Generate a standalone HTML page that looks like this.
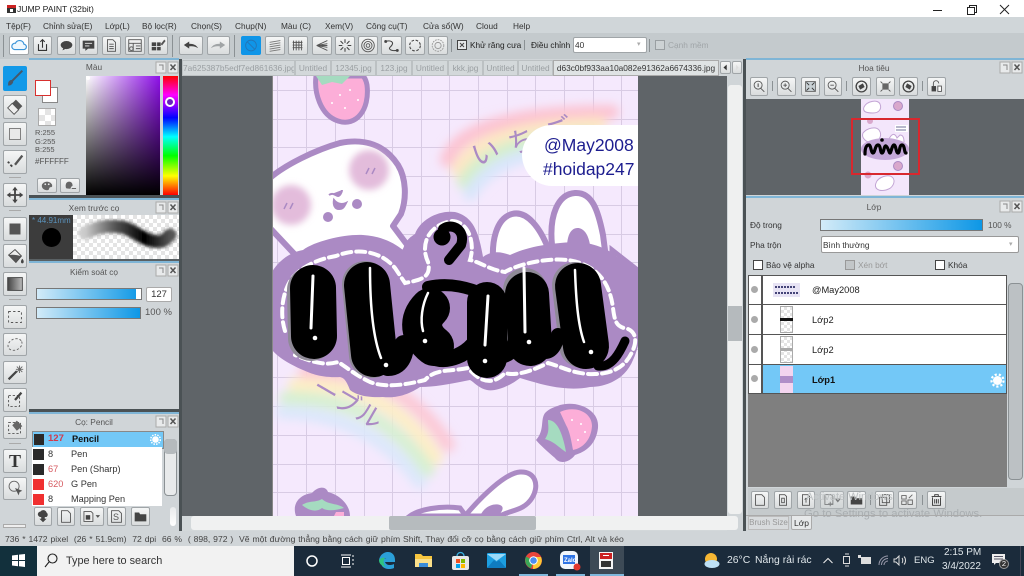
<!DOCTYPE html>
<html><head><meta charset="utf-8"><title>Jump Paint</title>
<style>
html,body{margin:0;padding:0;width:1024px;height:576px;overflow:hidden;background:#d3d8da}
body{position:relative;font-family:"Liberation Sans","Noto Sans CJK JP",sans-serif;font-size:8.3px;color:#333}
.a{position:absolute;box-sizing:border-box}
.t{position:absolute;white-space:nowrap;line-height:12px}
.b{position:absolute;box-sizing:border-box;background:linear-gradient(#f5f6f6,#d9dcdd);border:1px solid #a0a5a8;border-radius:2px}
.b svg{position:absolute;left:0;top:0;width:100%;height:100%}
.ck{position:absolute;box-sizing:border-box;width:10px;height:10px;background:#fff;border:1px solid #444}
.sep{position:absolute;width:1px;background:#8b9194}
.checker{background-color:#fff;background-image:linear-gradient(45deg,#e4e4e4 25%,transparent 25%,transparent 75%,#e4e4e4 75%),linear-gradient(45deg,#e4e4e4 25%,transparent 25%,transparent 75%,#e4e4e4 75%)}
.tab{position:absolute;top:60px;height:16px;box-sizing:border-box;border:1px solid #bcc1c3;background:#d3d8da;color:#9a9fa2;line-height:15px;text-align:center;white-space:nowrap;overflow:hidden}
.row{position:absolute;left:32px;width:130px;height:14px;background:#fff;border-bottom:1px solid #999;font-size:9.2px}
.lr{position:absolute;left:748px;width:259px;box-sizing:border-box;background:#fff;border:1px solid #555}
.m{top:20px}
</style></head>
<body>
<!-- Title bar -->
<div class="a" style="left:0;top:0;width:1024px;height:17px;background:#fff"></div>
<svg class="a" style="left:7px;top:5px" width="9" height="8" viewBox="0 0 9 8"><rect width="9" height="8" fill="#333"/><rect width="9" height="3" fill="#c22"/><rect x="3" y="4" width="3" height="3" fill="#fff"/></svg>
<div class="t" style="left:17px;top:3px;font-size:8.6px;color:#222">JUMP PAINT (32bit)</div>
<svg class="a" style="left:930px;top:2px" width="90" height="14" viewBox="0 0 90 14" fill="none" stroke="#222"><path d="M3 8.500h9"/><path d="M37.500 5.500h7v7h-7zM39.500 5.500v-2h7v7h-2"/><path d="M70 3l9 9M79 3l-9 9"/></svg>

<!-- Menu -->
<div class="a" style="left:0;top:17px;width:1024px;height:16px;background:#d0d6d9"></div>
<div class="t m" style="left:6px">Tệp(F)</div>
<div class="t m" style="left:43px">Chỉnh sửa(E)</div>
<div class="t m" style="left:105px">Lớp(L)</div>
<div class="t m" style="left:142px">Bộ lọc(R)</div>
<div class="t m" style="left:191px">Chọn(S)</div>
<div class="t m" style="left:235px">Chụp(N)</div>
<div class="t m" style="left:281px">Màu (C)</div>
<div class="t m" style="left:325px">Xem(V)</div>
<div class="t m" style="left:366px">Công cụ(T)</div>
<div class="t m" style="left:423px">Cửa sổ(W)</div>
<div class="t m" style="left:476px">Cloud</div>
<div class="t m" style="left:513px">Help</div>

<!-- Toolbar -->
<div class="a" style="left:0;top:33px;width:1024px;height:26px;background:#c4cacd"></div>
<div class="sep" style="left:3px;top:35px;height:22px"></div>
<div class="b" style="left:9px;top:36px;width:20px;height:19px;background:#fff"><svg viewBox="0 0 20 19"><path d="M5 14h10a3 3 0 0 0 .5-6 5 5 0 0 0-9.500-1 3.500 3.500 0 0 0-1 7z" fill="#eef7fd" stroke="#3a94d8" stroke-width="1.300"/></svg></div>
<div class="b" style="left:33px;top:36px;width:19px;height:19px"><svg viewBox="0 0 19 19" fill="none" stroke="#333" stroke-width="1.200"><path d="M5 8v7h9V8M9.500 12V3M7 5.500l2.500-2.500 2.500 2.500"/></svg></div>
<div class="b" style="left:57px;top:36px;width:19px;height:19px"><svg viewBox="0 0 19 19"><ellipse cx="9.500" cy="9" rx="6.500" ry="4.500" fill="#444"/><path d="M6 12l-1 3 4-2z" fill="#444"/></svg></div>
<div class="b" style="left:79px;top:36px;width:19px;height:19px"><svg viewBox="0 0 19 19"><path d="M3 4h13v9H9l-3 2.500V13H3z" fill="#444"/><path d="M5.500 7h8M5.500 10h5" stroke="#eee"/></svg></div>
<div class="b" style="left:102px;top:36px;width:19px;height:19px"><svg viewBox="0 0 19 19" fill="none" stroke="#555"><path d="M5 3h6l3 3v10H5zM7 8h5M7 10.500h5M7 13h5"/></svg></div>
<div class="b" style="left:125px;top:36px;width:20px;height:19px"><svg viewBox="0 0 20 19" fill="none" stroke="#555"><path d="M3 3h14v13H3zM3 7h14M8 7v9M11 10h5M11 13h5"/><circle cx="6" cy="13" r="2"/></svg></div>
<div class="b" style="left:148px;top:36px;width:20px;height:19px"><svg viewBox="0 0 20 19"><path d="M3 6h5v4H3zM9 6h4v4H9zM3 11h5v4H3zM9 11h4v4H9z" fill="#444"/><path d="M13 8l4-5 1.500 1.500-4 5z" fill="#555"/></svg></div>
<div class="sep" style="left:172px;top:35px;height:22px"></div>
<div class="b" style="left:179px;top:36px;width:24px;height:19px"><svg viewBox="0 0 24 19"><path d="M4 9l6-4v2.500c5 0 8 1.500 10 5-3-2-6-2.500-10-2V13z" fill="#444"/></svg></div>
<div class="b" style="left:207px;top:36px;width:23px;height:19px"><svg viewBox="0 0 23 19"><path d="M19 9l-6-4v2.500c-5 0-8 1.500-10 5 3-2 6-2.500 10-2V13z" fill="#a0a4a6"/></svg></div>
<div class="sep" style="left:234px;top:35px;height:22px"></div>
<div class="b" style="left:241px;top:36px;width:20px;height:19px;background:#0f95e8;border-color:#0f95e8"><svg viewBox="0 0 20 19" fill="none" stroke="#2376b8"><circle cx="10" cy="9.500" r="6"/><path d="M6 5.500l8 8"/></svg></div>
<div class="b" style="left:265px;top:36px;width:20px;height:19px"><svg viewBox="0 0 20 19" fill="none" stroke="#777"><path d="M4 6l12-2M4 8.500l12-2M4 11l12-2M4 13.500l12-2M4 16l12-2"/></svg></div>
<div class="b" style="left:288px;top:36px;width:20px;height:19px"><svg viewBox="0 0 20 19" fill="none" stroke="#555"><path d="M5 4v11M8 4v11M11 4v11M14 4v11M4 6h11M4 9h11M4 12h11"/></svg></div>
<div class="b" style="left:312px;top:36px;width:20px;height:19px"><svg viewBox="0 0 20 19" fill="none" stroke="#555"><path d="M4 9.500L16 4M4 9.500L16 7.500M4 9.500h12M4 9.500l12 2M4 9.500L16 15"/></svg></div>
<div class="b" style="left:335px;top:36px;width:20px;height:19px"><svg viewBox="0 0 20 19" fill="none" stroke="#444" stroke-width="1.200"><path d="M10 2.500v4M10 12.500v4M3 9.500h4M13 9.500h4M5 4.500l3 3M15 4.500l-3 3M5 14.500l3-3M15 14.500l-3-3"/></svg></div>
<div class="b" style="left:358px;top:36px;width:20px;height:19px"><svg viewBox="0 0 20 19" fill="none" stroke="#555"><circle cx="10" cy="9.500" r="7"/><circle cx="10" cy="9.500" r="4.500"/><circle cx="10" cy="9.500" r="2"/></svg></div>
<div class="b" style="left:381px;top:36px;width:21px;height:19px"><svg viewBox="0 0 21 19" fill="none" stroke="#444" stroke-width="1.200"><path d="M4 5c6-2 9 1 7 4s-4 3-2 5 5 1 8 1"/><circle cx="4" cy="5" r="1" fill="#444"/><circle cx="17" cy="15" r="1" fill="#444"/></svg></div>
<div class="b" style="left:405px;top:36px;width:20px;height:19px"><svg viewBox="0 0 20 19"><circle cx="10" cy="9.500" r="6" fill="none" stroke="#444" stroke-width="1.200" stroke-dasharray="3 1.800"/></svg></div>
<div class="b" style="left:428px;top:36px;width:20px;height:19px"><svg viewBox="0 0 20 19" fill="none" stroke="#999"><circle cx="10" cy="9.500" r="6.500" stroke-dasharray="2 1"/><circle cx="10" cy="9.500" r="3.500"/></svg></div>
<div class="sep" style="left:451px;top:39px;height:13px"></div>
<div class="ck" style="left:457px;top:40px;width:10px;height:10px;background:#e6e8e9"><svg style="position:absolute;left:0;top:0" width="8" height="8"><path d="M2 2l4 4M6 2L2 6" stroke="#444"/></svg></div>
<div class="t" style="left:470px;top:39px;color:#222">Khử răng cưa</div>
<div class="sep" style="left:524px;top:40px;height:10px"></div>
<div class="t" style="left:531px;top:39px;color:#222">Điều chỉnh</div>
<div class="a" style="left:573px;top:37px;width:74px;height:16px;background:#fff;border:1px solid #a0a5a8;border-radius:2px"></div>
<div class="t" style="left:575px;top:39px">40</div>
<div class="t" style="left:637px;top:39px;color:#aaa;font-size:7px">▾</div>
<div class="sep" style="left:649px;top:39px;height:13px"></div>
<div class="ck" style="left:655px;top:40px;border-color:#9a9fa2;background:#cdd2d4"></div>
<div class="t" style="left:668px;top:39px;color:#a0a5a8">Cạnh mềm</div>

<!-- Left tool column -->
<div class="a" style="left:0;top:59px;width:29px;height:472px;background:#d0d5d8"></div>
<div class="b" style="left:3px;top:66px;width:24px;height:25px;background:#1299e8;border-color:#1299e8"><svg viewBox="0 0 24 25"><path d="M20 4L9 15" stroke="#46586a" stroke-width="2.200"/><path d="M5 16c2-3 5-2 5 0s-3 5-6 4c1-1 0-2 1-4z" fill="#46586a"/></svg></div>
<div class="b" style="left:3px;top:95px;width:24px;height:24px"><svg viewBox="0 0 24 24"><path d="M13 4l7 7-9 9-7-7z" fill="#555"/><path d="M4 13l5-5 7 7-5 5z" fill="#eee" stroke="#555"/></svg></div>
<div class="b" style="left:3px;top:122px;width:24px;height:24px"><svg viewBox="0 0 24 24"><rect x="6" y="6" width="12" height="12" fill="#e8e8e8" stroke="#777"/></svg></div>
<div class="b" style="left:3px;top:150px;width:24px;height:24px"><svg viewBox="0 0 24 24"><path d="M20 5l-8 10" stroke="#555" stroke-width="2.500"/><path d="M4 12l2 1M7 15l2 2" stroke="#444" stroke-width="2"/></svg></div>
<div class="a" style="left:9px;top:177px;width:12px;height:1px;background:#aaa"></div>
<div class="b" style="left:3px;top:183px;width:24px;height:24px"><svg viewBox="0 0 24 24" fill="#444"><path d="M12 3l3 4h-2v4h4V9l4 3-4 3v-2h-4v4h2l-3 4-3-4h2v-4H7v2l-4-3 4-3v2h4V7H9z"/></svg></div>
<div class="a" style="left:9px;top:210px;width:12px;height:1px;background:#aaa"></div>
<div class="b" style="left:3px;top:217px;width:24px;height:24px"><svg viewBox="0 0 24 24"><rect x="6" y="6" width="12" height="12" fill="#555"/></svg></div>
<div class="b" style="left:3px;top:244px;width:24px;height:24px"><svg viewBox="0 0 24 24"><path d="M5 11l7-6 7 7-6 7z" fill="#eee" stroke="#444"/><path d="M5 11c5-1 9 0 14 1l-6 7z" fill="#555"/><path d="M20 15c2 2 2 5 0 5s-2-3 0-5z" fill="#444"/></svg></div>
<div class="b" style="left:3px;top:272px;width:24px;height:24px"><svg viewBox="0 0 24 24"><defs><linearGradient id="gg" x1="0" x2="1"><stop offset="0" stop-color="#444"/><stop offset="1" stop-color="#bbb"/></linearGradient></defs><rect x="4" y="5" width="16" height="14" fill="url(#gg)" stroke="#444"/></svg></div>
<div class="a" style="left:9px;top:299px;width:12px;height:1px;background:#aaa"></div>
<div class="b" style="left:3px;top:305px;width:24px;height:24px"><svg viewBox="0 0 24 24"><rect x="5" y="6" width="14" height="12" fill="none" stroke="#555" stroke-dasharray="2.500 2.500"/></svg></div>
<div class="b" style="left:3px;top:333px;width:24px;height:23px"><svg viewBox="0 0 24 23"><ellipse cx="12" cy="11.500" rx="8" ry="6" fill="none" stroke="#666" stroke-dasharray="2.500 2" transform="rotate(-25 12 11.500)"/></svg></div>
<div class="b" style="left:3px;top:361px;width:24px;height:23px"><svg viewBox="0 0 24 23"><path d="M5 19L14 10" stroke="#444" stroke-width="2.500"/><path d="M17 4v8M13 8h8M14 5l6 6M20 5l-6 6" stroke="#666"/></svg></div>
<div class="b" style="left:3px;top:388px;width:24px;height:24px"><svg viewBox="0 0 24 24"><rect x="5" y="7" width="12" height="12" fill="none" stroke="#555" stroke-dasharray="2.500 2"/><path d="M19 4l-7 8" stroke="#444" stroke-width="2.500"/></svg></div>
<div class="b" style="left:3px;top:416px;width:24px;height:23px"><svg viewBox="0 0 24 23"><rect x="5" y="6" width="13" height="12" fill="none" stroke="#555" stroke-dasharray="2.500 2"/><path d="M14 4l6 6-6 5-5-6z" fill="#666"/></svg></div>
<div class="a" style="left:9px;top:443px;width:12px;height:1px;background:#aaa"></div>
<div class="b" style="left:3px;top:449px;width:24px;height:24px"><div class="t" style="left:0;top:4px;width:22px;text-align:center;font:bold 18px 'Liberation Serif',serif;line-height:15px;color:#333">T</div></div>
<div class="b" style="left:3px;top:477px;width:24px;height:23px"><svg viewBox="0 0 24 23"><circle cx="11" cy="9" r="5.500" fill="none" stroke="#666"/><path d="M12 11l8 3-3 1.500-1 3.500z" fill="#555"/></svg></div>
<div class="a" style="left:3px;top:524px;width:23px;height:4px;background:#eee;border:1px solid #aaa;box-sizing:border-box"></div>

<!-- Left panels -->
<div class="a" style="left:29px;top:59px;width:150px;height:472px;background:#d0d5d8"></div>
<div class="a" style="left:29px;top:58px;width:150px;height:2px;background:#7fb5d6"></div>
<div class="t" style="left:29px;top:61px;width:130px;text-align:center;color:#555">Màu</div>
<svg class="a" style="left:155px;top:60px" width="24" height="15"><rect x="1" y="2" width="10" height="11" fill="#e8eaeb" stroke="#aaa"/><path d="M4 5h4v5" fill="none" stroke="#888"/><rect x="13" y="2" width="10" height="11" fill="#e8eaeb" stroke="#aaa"/><path d="M15.500 4.500l5 5.500M20.500 4.500l-5 5.500" stroke="#555" stroke-width="1.500"/></svg>
<div class="a" style="left:42px;top:87px;width:16px;height:16px;background:#fff;border:1px solid #888"></div>
<div class="a" style="left:35px;top:80px;width:16px;height:16px;background:#fff;border:1px solid #d8302e"></div>
<div class="a checker" style="left:38px;top:108px;width:18px;height:18px;background-size:12px 12px;background-position:0 0,6px 6px;border:1px solid #aaa"></div>
<div class="t" style="left:35px;top:129px;font-size:7.500px;line-height:8.500px;color:#555">R:255<br>G:255<br>B:255</div>
<div class="t" style="left:35px;top:156px;font-size:8px;color:#555">#FFFFFF</div>
<div class="b" style="left:37px;top:178px;width:20px;height:15px"><svg viewBox="0 0 20 15"><path d="M4 8a6 5 0 0 1 12 0c0 2-2 1-3 2s0 3-3 3-6-2-6-5z" fill="#666"/><circle cx="8" cy="6" r="1" fill="#eee"/><circle cx="12" cy="6" r="1" fill="#eee"/></svg></div>
<div class="b" style="left:60px;top:178px;width:20px;height:15px"><svg viewBox="0 0 20 15"><path d="M5 7a4 4 0 0 1 8 0c0 2-2 1-2 3s-2 1-4 1-2-2-2-4z" fill="#666"/><path d="M12 11h5" stroke="#555"/></svg></div>
<div class="a" style="left:86px;top:76px;width:74px;height:119px;background:linear-gradient(to bottom,rgba(0,0,0,0),#000),linear-gradient(to right,#fff,#8e10e8)"></div>
<div class="a" style="left:86px;top:76px;width:4px;height:4px;background:#fff;border-radius:2px"></div>
<div class="a" style="left:163px;top:76px;width:15px;height:119px;background:linear-gradient(to bottom,#f00,#f0f 16%,#00f 35%,#0ff 51%,#0f0 67%,#ff0 84%,#f00)"></div>
<div class="a" style="left:165px;top:97px;width:10px;height:10px;border:2px solid #fff;border-radius:50%;background:#6a1fc0"></div>
<div class="a" style="left:29px;top:195px;width:150px;height:3px;background:#4a5154"></div>
<div class="a" style="left:29px;top:198px;width:150px;height:2px;background:#7fb5d6"></div>
<div class="t" style="left:29px;top:202px;width:130px;text-align:center;color:#555">Xem trước cọ</div>
<svg class="a" style="left:155px;top:200px" width="24" height="15"><rect x="1" y="2" width="10" height="11" fill="#e8eaeb" stroke="#aaa"/><path d="M4 5h4v5" fill="none" stroke="#888"/><rect x="13" y="2" width="10" height="11" fill="#e8eaeb" stroke="#aaa"/><path d="M15.500 4.500l5 5.500M20.500 4.500l-5 5.500" stroke="#555" stroke-width="1.500"/></svg>
<div class="a" style="left:29px;top:215px;width:44px;height:44px;background:#3c3c3c"></div>
<div class="t" style="left:32px;top:215px;color:#5b93bd;font-size:8px">* 44.91mm</div>
<div class="a" style="left:42px;top:228px;width:19px;height:19px;background:#000;border-radius:50%"></div>
<div class="a checker" style="left:73px;top:215px;width:106px;height:44px;background-size:8px 8px;background-position:0 0,4px 4px"></div>
<svg class="a" style="left:73px;top:215px" width="106" height="44"><defs><linearGradient id="st" x1="0" x2="1"><stop offset="0" stop-color="#ccc"/><stop offset=".35" stop-color="#555"/><stop offset=".7" stop-color="#000"/><stop offset="1" stop-color="#555"/></linearGradient><filter id="bl1" x="-10%" y="-50%" width="120%" height="200%"><feGaussianBlur stdDeviation="1.500"/></filter></defs><path d="M12 18C28 10 38 11 48 12S68 24 80 26 92 24 97 20" fill="none" stroke="url(#st)" stroke-width="13" stroke-linecap="round" filter="url(#bl1)"/></svg>
<div class="a" style="left:29px;top:259px;width:150px;height:2px;background:#5a6164"></div>
<div class="a" style="left:29px;top:261px;width:150px;height:2px;background:#7fb5d6"></div>
<div class="t" style="left:29px;top:266px;width:130px;text-align:center;color:#555">Kiểm soát cọ</div>
<svg class="a" style="left:155px;top:263px" width="24" height="15"><rect x="1" y="2" width="10" height="11" fill="#e8eaeb" stroke="#aaa"/><path d="M4 5h4v5" fill="none" stroke="#888"/><rect x="13" y="2" width="10" height="11" fill="#e8eaeb" stroke="#aaa"/><path d="M15.500 4.500l5 5.500M20.500 4.500l-5 5.500" stroke="#555" stroke-width="1.500"/></svg>
<div class="a" style="left:36px;top:288px;width:106px;height:12px;background:linear-gradient(to right,#d3ebf8,#0d97e6);border:1px solid #777"></div>
<div class="a" style="left:136px;top:289px;width:5px;height:10px;background:#fff"></div>
<div class="a" style="left:146px;top:287px;width:26px;height:15px;background:#fff;border:1px solid #aaa;border-radius:2px;text-align:center;line-height:13px;font-size:9.500px">127</div>
<div class="a" style="left:36px;top:307px;width:105px;height:12px;background:linear-gradient(to right,#d3ebf8,#0d97e6);border:1px solid #777"></div>
<div class="t" style="left:145px;top:307px;font-size:9.500px;color:#555">100 %</div>
<div class="a" style="left:29px;top:409px;width:150px;height:3px;background:#4a5154"></div>
<div class="a" style="left:29px;top:412px;width:150px;height:2px;background:#7fb5d6"></div>
<div class="t" style="left:29px;top:416px;width:130px;text-align:center;color:#555">Cọ: Pencil</div>
<svg class="a" style="left:155px;top:414px" width="24" height="15"><rect x="1" y="2" width="10" height="11" fill="#e8eaeb" stroke="#aaa"/><path d="M4 5h4v5" fill="none" stroke="#888"/><rect x="13" y="2" width="10" height="11" fill="#e8eaeb" stroke="#aaa"/><path d="M15.500 4.500l5 5.500M20.500 4.500l-5 5.500" stroke="#555" stroke-width="1.500"/></svg>
<!-- Brush list -->
<div class="row" style="top:431px;height:16px;background:#73c8f7;border:1px solid #888"><div class="a" style="left:1px;top:2px;width:10px;height:11px;background:#2a2a2a"></div><div class="t" style="left:15px;top:1px;color:#d23a4a;font-weight:bold;font-size:9.500px">127</div><div class="t" style="left:39px;top:1px;color:#111;font-weight:bold">Pencil</div><svg class="a" style="right:2px;top:2px" width="11" height="11" viewBox="0 0 11 11"><circle cx="5.500" cy="5.500" r="3.300" fill="#fff"/><circle cx="5.500" cy="5.500" r="4.800" fill="none" stroke="#fff" stroke-width="1.500" stroke-dasharray="1.500 1.200"/></svg></div>
<div class="row" style="top:447px;height:15px"><div class="a" style="left:1px;top:2px;width:11px;height:11px;background:#2a2a2a"></div><div class="t" style="left:16px;top:1px">8</div><div class="t" style="left:39px;top:1px">Pen</div></div>
<div class="row" style="top:462px;height:15px"><div class="a" style="left:1px;top:2px;width:11px;height:11px;background:#2a2a2a"></div><div class="t" style="left:16px;top:1px;color:#d65a60">67</div><div class="t" style="left:39px;top:1px">Pen (Sharp)</div></div>
<div class="row" style="top:477px;height:15px"><div class="a" style="left:1px;top:2px;width:11px;height:11px;background:#f03030"></div><div class="t" style="left:16px;top:1px;color:#d65a60">620</div><div class="t" style="left:39px;top:1px">G Pen</div></div>
<div class="row" style="top:492px;height:14px;border:0"><div class="a" style="left:1px;top:2px;width:11px;height:11px;background:#f03030"></div><div class="t" style="left:16px;top:1px">8</div><div class="t" style="left:39px;top:1px">Mapping Pen</div></div>
<div class="a" style="left:164px;top:439px;width:13px;height:57px;background:#e8eaeb;border:1px solid #8b9194;border-radius:4px"></div>
<div class="a" style="left:164px;top:439px;width:13px;height:15px;background:#b5babd;border-radius:4px"></div>
<div class="b" style="left:34px;top:507px;width:18px;height:19px"><svg viewBox="0 0 18 19"><path d="M4 9a3 3 0 0 1 2-5 4 4 0 0 1 7 1 3 3 0 0 1 0 5h-2v2h2l-4 4-4-4h2v-2H6a2 2 0 0 1-2-1z" fill="#444"/></svg></div>
<div class="b" style="left:57px;top:507px;width:18px;height:19px"><svg viewBox="0 0 18 19" fill="none" stroke="#555"><path d="M4 3h7l3 3v10H4z"/></svg></div>
<div class="b" style="left:80px;top:507px;width:24px;height:19px"><svg viewBox="0 0 24 19"><path d="M3 4h8l2 2v9H3z" fill="#eee" stroke="#555"/><rect x="5" y="8" width="5" height="5" fill="#444"/><path d="M16 8h5l-2.500 3z" fill="#555"/></svg></div>
<div class="b" style="left:107px;top:507px;width:19px;height:19px"><svg viewBox="0 0 19 19" fill="none" stroke="#555"><path d="M4 3h8l3 3v10H4z"/></svg><div class="t" style="left:5px;top:3px;font-size:9px;color:#555">S</div></div>
<div class="b" style="left:131px;top:507px;width:19px;height:19px"><svg viewBox="0 0 19 19"><path d="M3 5h5l1 2h7v8H3z" fill="#444"/></svg></div>
<div class="a" style="left:170px;top:507px;width:6px;height:19px;background:linear-gradient(#e8eaeb,#fff);border-radius:3px"></div>

<!-- Splitters -->
<div class="a" style="left:179px;top:59px;width:3px;height:472px;background:#4a5154"></div>
<div class="a" style="left:743px;top:59px;width:3px;height:472px;background:#4a5154"></div>
<!-- Tabs -->
<div class="a" style="left:182px;top:59px;width:561px;height:18px;background:#d0d5d8"></div>
<div class="tab" style="left:182px;width:113px;text-align:right;padding-right:3px">7a625387b5edf7ed861636.jpg</div>
<div class="tab" style="left:295px;width:36px">Untitled</div>
<div class="tab" style="left:331px;width:45px">12345.jpg</div>
<div class="tab" style="left:376px;width:36px">123.jpg</div>
<div class="tab" style="left:412px;width:36px">Untitled</div>
<div class="tab" style="left:448px;width:35px">kkk.jpg</div>
<div class="tab" style="left:483px;width:35px">Untitled</div>
<div class="tab" style="left:518px;width:35px">Untitled</div>
<div class="tab" style="left:553px;width:166px;background:#dfe3e4;color:#333;border-color:#aaa">d63c0bf933aa10a082e91362a6674336.jpg</div>
<div class="b" style="left:720px;top:61px;width:11px;height:13px"><svg viewBox="0 0 11 13"><path d="M7 3L3 6.500 7 10z" fill="#333"/></svg></div>
<div class="b" style="left:732px;top:61px;width:10px;height:13px"><svg viewBox="0 0 10 13"><path d="M4 3l3 3.500L4 10z" fill="#ddd"/></svg></div>

<!-- Canvas -->
<div class="a" style="left:182px;top:76px;width:561px;height:455px;background:#d3d8da"></div>
<div class="a" style="left:182px;top:76px;width:545px;height:440px;background:#5f6468"></div>
<svg class="a" style="left:272px;top:76px" width="366" height="440" viewBox="272 76 366 440">
<defs>
<filter id="r" x="-30%" y="-30%" width="160%" height="160%"><feGaussianBlur stdDeviation="5"/></filter>
<filter id="c" x="-50%" y="-50%" width="200%" height="200%"><feGaussianBlur stdDeviation="3.500"/></filter>
</defs>
<rect x="272" y="76" width="366" height="440" fill="#f5e9fd"/>
<g stroke="#d8cbe4" stroke-width="1" fill="none">
<path d="M277.500 76v440M306.500 76v440M335.500 76v440M364.500 76v440M392.500 76v440M421.500 76v440M449.500 76v440M478.500 76v440M507.500 76v440M535.500 76v440M564.500 76v440M593.500 76v440M621.500 76v440"/>
<path d="M272 90.500h366M272 119.500h366M272 147.500h366M272 176.500h366M272 205.500h366M272 234.500h366M272 262.500h366M272 291.500h366M272 320.500h366M272 349.500h366M272 377.500h366M272 406.500h366M272 435.500h366M272 464.500h366M272 492.500h366"/>
</g>
<!-- rainbows -->
<g fill="none" stroke-width="14" filter="url(#r)" stroke-linecap="round">
<path d="M447 160Q465 112 612 112" stroke="#fcc3d2"/>
<path d="M458 170Q478 126 600 124" stroke="#fde7c4"/>
<path d="M464 182Q490 138 590 136" stroke="#d4efcc"/>
<path d="M470 194Q495 150 580 150" stroke="#d8e6fb"/>
<path d="M305 372Q400 368 448 445" stroke="#fcc9d6"/>
<path d="M295 385Q392 383 436 458" stroke="#fdeec6"/>
<path d="M286 398Q380 398 428 470" stroke="#d7f0d2"/>
<path d="M282 412Q370 414 420 482" stroke="#dce8fb"/>
</g>
<!-- JP text -->
<text x="475" y="166" font-size="28" letter-spacing="10" fill="#ab8ac4" transform="rotate(-17 475 166)" font-family="'Noto Sans CJK JP',sans-serif">いちご</text>
<text x="310" y="392" font-size="26" fill="#ab8ac4" transform="rotate(30 310 392)" font-family="'Noto Sans CJK JP',sans-serif">ーブル</text>
<!-- top strawberry -->
<path d="M316 76C314 92 320 115 338 121S370 110 367 85C366 80 364 76 362 76Z" fill="#fcaed8" stroke="#ab8ac4" stroke-width="5"/>
<path d="M316 76l6 9 10-3 10 2 8-8z" fill="#a5dbc0"/>
<g fill="#fff"><circle cx="340" cy="95" r="1"/><circle cx="350" cy="90" r="1"/><circle cx="345" cy="108" r="1"/><circle cx="332" cy="103" r="1"/><circle cx="358" cy="100" r="1"/></g>
<!-- rabbit -->
<path d="M270 178C285 165 315 150 340 143 365 138 385 145 398 165 406 178 407 198 401 214L393 226 408 246 400 260H300L270 228Z" fill="#fff" stroke="#ab8ac4" stroke-width="6" stroke-linejoin="round"/>
<ellipse cx="369" cy="170" rx="20" ry="20" fill="#e3bcdb" filter="url(#c)"/>
<ellipse cx="291" cy="205" rx="20" ry="20" fill="#e3bcdb" filter="url(#c)"/>
<path d="M369 168l-3 6M375 168l-3 6M287 203l-3 6M293 203l-3 6" stroke="#ab8ac4" stroke-width="1.500"/>
<circle cx="357" cy="204" r="5" fill="#ab8ac4"/><circle cx="328" cy="217" r="5" fill="#ab8ac4"/>
<path d="M329 195c4-3 7 1 9 1s4-4 4-6M334 200c3 4 8 5 12 3-2 4-3 6-7 6s-6-4-5-9z" fill="#ab8ac4" stroke="#ab8ac4" stroke-width="2"/>
<!-- ears -->
<path d="M494 270C490 240 497 218 512 214S540 228 548 248L552 262Z" fill="#fff" stroke="#ab8ac4" stroke-width="6"/>
<path d="M552 245C549 215 558 194 575 193S598 210 603 235L606 258H552Z" fill="#fff" stroke="#ab8ac4" stroke-width="6"/>
<path d="M567 245C568 230 574 228 578 228S588 232 590 245Z" fill="#ab8ac4"/>
<path d="M612 250L640 272V300H612Z" fill="#fff" stroke="#ab8ac4" stroke-width="5"/>
<ellipse cx="630" cy="308" rx="13" ry="18" fill="#f4c6e2" filter="url(#c)"/>
<!-- purple cloud -->
<path d="M268 280C275 262 290 252 303 250 315 241 345 234 363 235 380 236 393 242 403 250 405 240 412 236 415 234 420 220 438 210 455 212 470 216 478 226 483 257 492 250 502 252 510 255 525 248 545 243 577 242 595 243 610 250 617 257 628 260 640 270 645 284V325C640 330 640 345 633 360 625 380 605 387 590 387 565 392 540 384 520 378 510 386 495 392 487 390 478 388 474 382 470 380 450 384 436 387 420 387 405 397 392 398 383 397 365 398 355 394 350 390 346 380 344 378 340 377 320 378 310 373 303 370 285 362 275 355 270 347Z" fill="#ab8ac4"/>
<!-- dashes -->
<path d="M285 331C279 312 283 288 294 276 308 262 325 258 336 256 356 248 380 250 395 268L405 283C420 280 432 278 428 262 420 245 428 225 452 221 470 222 475 245 470 260 480 262 490 270 505 272 522 262 560 255 580 263 600 270 610 285 613 308 615 325 618 327 628 329 635 332 638 340 632 352 625 368 610 374 595 374 575 375 560 366 548 363 530 372 515 376 505 373 492 386 480 382 468 368 450 372 436 368 425 380 405 385 385 388 370 382 355 375 345 366 338 362 325 366 312 362 295 355 285 345 285 331Z" fill="none" stroke="#fff" stroke-width="4" stroke-dasharray="9 5" stroke-linecap="round"/>
<!-- grey shadows -->
<g fill="none" stroke="#8f8a97" stroke-linecap="round">
<path d="M310 290L311 338" stroke-width="46"/>
<path d="M365 284L372 355" stroke-width="46"/>
<path d="M525 290L527 342" stroke-width="44"/>
<path d="M575 285L582 345" stroke-width="46"/>
</g>
<!-- black letters -->
<g fill="none" stroke="#000" stroke-linecap="round" stroke-linejoin="round">
<path d="M313 288L314 336" stroke-width="46"/>
<path d="M367 285L374 354" stroke-width="46"/>
<path d="M388 366C402 366 404 350 404 345" stroke-width="20"/>
<path d="M430 308C418 320 420 335 434 346" stroke-width="40"/>
<path d="M428 287C450 282 470 288 486 295" stroke-width="12"/>
<path d="M435 358C450 362 465 354 473 345" stroke-width="16"/>
<path d="M487 302L487 358" stroke-width="40"/>
<path d="M500 356C512 354 516 345 516 335" stroke-width="16"/>
<path d="M527 294L530 344" stroke-width="44"/>
<path d="M545 352C552 352 556 345 558 335" stroke-width="14"/>
<path d="M578 286L586 346" stroke-width="46"/>
<path d="M598 366C612 368 620 352 625 341" stroke-width="9"/>
<path d="M443 229C452 222 466 230 461 245L449 260" stroke-width="10"/>
<circle cx="442" cy="237" r="8.500" fill="#000" stroke="none"/>
</g>
<!-- white highlights -->
<g fill="none" stroke="#fff" stroke-linecap="round">
<path d="M313 276L311 328" stroke-width="3"/>
<path d="M370 268C370 300 372 335 381 358" stroke-width="2.500"/>
<path d="M428 293C422 305 420 320 423 331" stroke-width="2.500"/>
<path d="M488 296L485 345" stroke-width="3"/>
<path d="M524 268L525 332" stroke-width="3"/>
<path d="M575 270C576 300 578 325 584 342" stroke-width="2.500"/>
</g>
<g fill="#fff"><circle cx="315" cy="338" r="2.300"/><circle cx="386" cy="365" r="2.300"/><circle cx="425" cy="341" r="2.300"/><circle cx="485" cy="361" r="2.300"/><circle cx="529" cy="342" r="2.300"/><circle cx="591" cy="352" r="2.300"/></g>
<!-- strawberry right -->
<path d="M560 405C578 400 600 410 598 428 596 445 585 452 575 455 570 462 560 465 555 458 548 452 540 445 536 440 545 430 540 420 545 413 550 408 555 407 560 405Z" fill="#ab8ac4"/>
<path d="M560 412C575 405 592 412 592 426 591 440 583 448 573 450 571 440 570 432 566 425Z" fill="#fcaed8"/>
<path d="M548 420C556 420 562 430 566 452 558 447 555 442 545 439 550 432 548 426 548 420Z" fill="#a5dbc0"/>
<g fill="#fff"><circle cx="572" cy="420" r="1"/><circle cx="581" cy="424" r="1"/><circle cx="585" cy="432" r="1"/><circle cx="578" cy="440" r="1"/></g>
<!-- strawberry bottom -->
<path d="M296 516C292 505 298 495 312 493 318 486 326 486 328 492 340 495 350 505 350 516Z" fill="#ab8ac4"/>
<path d="M302 505C310 500 315 503 322 499 328 505 338 503 344 508 336 510 328 512 322 508 316 513 308 510 302 505Z" fill="#a5dbc0"/>
<path d="M336 512h8v4h-10z" fill="#fcaed8"/>
<!-- bottom rabbit -->
<path d="M465 516C480 498 505 473 520 472S540 485 532 498 510 510 500 516Z" fill="#fff" stroke="#ab8ac4" stroke-width="5"/>
<path d="M410 516C418 510 440 505 460 508L466 516Z" fill="#fff" stroke="#ab8ac4" stroke-width="5"/>
<path d="M480 516C485 505 495 503 500 505S502 512 498 516Z" fill="#ab8ac4"/>
<!-- bubble -->
<path d="M552 125H640V186H552C534 186 522 170 522 155S534 125 552 125Z" fill="#fff"/>
<text x="544" y="151" font-size="17.500" fill="#1d1d8f" font-family="'Liberation Sans',sans-serif">@May2008</text>
<text x="543" y="175" font-size="17.500" fill="#1d1d8f" font-family="'Liberation Sans',sans-serif">#hoidap247</text>
</svg>
<div class="a" style="left:272px;top:76px;width:1px;height:440px;background:#888"></div>
<!-- Scrollbars -->
<div class="a" style="left:727px;top:76px;width:16px;height:455px;background:#d0d5d8"></div>
<div class="a" style="left:728px;top:85px;width:14px;height:429px;background:#eff0f0;border-radius:3px"></div>
<div class="a" style="left:728px;top:306px;width:14px;height:35px;background:#b5babd"></div>
<div class="a" style="left:191px;top:516px;width:547px;height:14px;background:#f0f1f1;border-radius:3px"></div>
<div class="a" style="left:389px;top:516px;width:147px;height:14px;background:#b6bbbe;border-radius:2px"></div>

<!-- Right: navigator -->
<div class="a" style="left:746px;top:59px;width:278px;height:472px;background:#d0d5d8"></div>
<div class="a" style="left:746px;top:58px;width:278px;height:2px;background:#7fb5d6"></div>
<div class="t" style="left:746px;top:62px;width:256px;text-align:center;color:#555">Hoa tiêu</div>
<svg class="a" style="left:999px;top:60px" width="24" height="15"><rect x="1" y="2" width="10" height="11" fill="#e8eaeb" stroke="#aaa"/><path d="M4 5h4v5" fill="none" stroke="#888"/><rect x="13" y="2" width="10" height="11" fill="#e8eaeb" stroke="#aaa"/><path d="M15.500 4.500l5 5.500M20.500 4.500l-5 5.500" stroke="#555" stroke-width="1.500"/></svg>
<div class="b" style="left:750px;top:77px;width:18px;height:19px"><svg viewBox="0 0 18 19" fill="none" stroke="#555"><circle cx="8" cy="8" r="4.500"/><path d="M11 11.500l4 4"/><path d="M8 6v4" stroke="#333"/></svg></div>
<div class="sep" style="left:772px;top:81px;height:10px"></div>
<div class="b" style="left:777px;top:77px;width:19px;height:19px"><svg viewBox="0 0 19 19" fill="none" stroke="#555"><circle cx="8" cy="8" r="4.500"/><path d="M11 11.500l4 4M6 8h4M8 6v4"/></svg></div>
<div class="b" style="left:801px;top:77px;width:19px;height:19px"><svg viewBox="0 0 19 19"><rect x="4" y="4" width="11" height="11" fill="#c8d0d4" stroke="#666"/><path d="M5 5l3 3M14 5l-3 3M5 14l3-3M14 14l-3-3" stroke="#333"/></svg></div>
<div class="b" style="left:824px;top:77px;width:18px;height:19px"><svg viewBox="0 0 18 19" fill="none" stroke="#555"><circle cx="8" cy="8" r="4.500"/><path d="M11 11.500l4 4M6 8h4"/></svg></div>
<div class="sep" style="left:846px;top:81px;height:10px"></div>
<div class="b" style="left:852px;top:77px;width:19px;height:19px"><svg viewBox="0 0 19 19"><circle cx="9.500" cy="9.500" r="6" fill="none" stroke="#444" stroke-width="1.500"/><path d="M6 9l5-3 2 4-5 3z" fill="#444"/></svg></div>
<div class="b" style="left:876px;top:77px;width:19px;height:19px"><svg viewBox="0 0 19 19"><rect x="6" y="6" width="7" height="7" fill="#666"/><path d="M4 4l2 2M15 4l-2 2M4 15l2-2M15 15l-2-2" stroke="#555"/></svg></div>
<div class="b" style="left:899px;top:77px;width:19px;height:19px"><svg viewBox="0 0 19 19"><circle cx="9.500" cy="9.500" r="6" fill="none" stroke="#444" stroke-width="1.500"/><path d="M13 9l-5-3-2 4 5 3z" fill="#444"/></svg></div>
<div class="sep" style="left:922px;top:81px;height:10px"></div>
<div class="b" style="left:927px;top:77px;width:19px;height:19px"><svg viewBox="0 0 19 19"><rect x="4" y="9" width="5" height="6" fill="#444"/><rect x="11" y="9" width="4" height="6" fill="#fff" stroke="#555"/><path d="M6 9V6a3 3 0 0 1 6 0" fill="none" stroke="#555"/></svg></div>
<div class="a" style="left:746px;top:99px;width:278px;height:96px;background:#5f6468"></div>
<svg class="a" style="left:861px;top:99px" width="48" height="96" viewBox="0 0 48 96">
<rect width="48" height="96" fill="#f3e6fb"/>
<path d="M3 8c3-6 14-8 16-3s-1 9-7 9S1 13 3 8z" fill="#fff" stroke="#c2a4d4"/><circle cx="37" cy="7" r="4.500" fill="#d9a8cc" stroke="#ab8ac4"/>
<circle cx="9" cy="22" r="3" fill="#d9a8cc"/>
<path d="M2 34c4-5 13-7 16-3s2 10-5 12-13-4-11-9z" fill="#fff" stroke="#c2a4d4"/>
<rect x="34" y="26" width="13" height="7" fill="#fff"/><path d="M35 28h10M35 31h10" stroke="#447" stroke-width=".7"/>
<path d="M28 40c3-6 6-6 8-1l3-3c3 0 4 3 4 7" fill="#fff" stroke="#c2a4d4"/>
<ellipse cx="24" cy="50" rx="24" ry="11" fill="#c4a8d8"/>
<path d="M4 55c0-8 2-9 4-9s2 8 4 8 2-8 5-8 2 8 4 8 2-8 4-7 3 7 4 7 2-8 4-8 2 8 4 8 1-8 4-8 2 8 4 8" fill="none" stroke="#000" stroke-width="3.200" stroke-linecap="round"/>
<circle cx="21" cy="41" r="1.800" fill="#000"/>
<circle cx="37" cy="67" r="4.500" fill="#d9a8cc" stroke="#ab8ac4"/><circle cx="7" cy="76" r="3.500" fill="#d9a8cc"/>
<path d="M15 84c2-6 12-9 16-6s2 11-6 13-12-2-10-7z" fill="#fff" stroke="#c2a4d4"/>
</svg>
<div class="a" style="left:851px;top:118px;width:69px;height:57px;border:2px solid #d8282e"></div>

<!-- Layer panel -->
<div class="a" style="left:746px;top:196px;width:278px;height:2px;background:#7fb5d6"></div>
<div class="t" style="left:746px;top:201px;width:256px;text-align:center;color:#555">Lớp</div>
<svg class="a" style="left:999px;top:199px" width="24" height="15"><rect x="1" y="2" width="10" height="11" fill="#e8eaeb" stroke="#aaa"/><path d="M4 5h4v5" fill="none" stroke="#888"/><rect x="13" y="2" width="10" height="11" fill="#e8eaeb" stroke="#aaa"/><path d="M15.500 4.500l5 5.500M20.500 4.500l-5 5.500" stroke="#555" stroke-width="1.500"/></svg>
<div class="t" style="left:750px;top:219px;color:#333">Độ trong</div>
<div class="a" style="left:820px;top:219px;width:163px;height:12px;background:linear-gradient(to right,#d3ebf8,#0d97e6);border:1px solid #777"></div>
<div class="t" style="left:988px;top:219px;color:#555">100 %</div>
<div class="t" style="left:750px;top:239px;color:#333">Pha trộn</div>
<div class="a" style="left:821px;top:236px;width:198px;height:17px;background:#fff;border:1px solid #999;border-radius:2px"></div>
<div class="t" style="left:823px;top:239px;color:#333">Bình thường</div>
<div class="t" style="left:1009px;top:239px;color:#aaa;font-size:7px">▾</div>
<div class="ck" style="left:753px;top:260px"></div>
<div class="t" style="left:766px;top:259px;color:#333">Bảo vệ alpha</div>
<div class="ck" style="left:845px;top:260px;background:#c2c6c8;border-color:#999"></div>
<div class="t" style="left:858px;top:259px;color:#999">Xén bớt</div>
<div class="ck" style="left:935px;top:260px"></div>
<div class="t" style="left:948px;top:259px;color:#333">Khóa</div>
<!-- Layer list -->
<div class="a" style="left:748px;top:275px;width:259px;height:212px;background:#7f7f7f"></div>
<div class="lr" style="top:275px;height:30px"></div>
<div class="lr" style="top:304px;height:31px"></div>
<div class="lr" style="top:334px;height:31px"></div>
<div class="lr" style="top:364px;height:30px;background:#73c8f7"></div>
<div class="a" style="left:748px;top:364px;width:14px;height:30px;background:#fff;border:1px solid #555"></div>
<div class="a" style="left:761px;top:275px;width:2px;height:119px;background:#555"></div>
<div class="a" style="left:751px;top:286px;width:7px;height:7px;background:#aaa;border-radius:50%"></div>
<div class="a" style="left:751px;top:316px;width:7px;height:7px;background:#aaa;border-radius:50%"></div>
<div class="a" style="left:751px;top:346px;width:7px;height:7px;background:#aaa;border-radius:50%"></div>
<div class="a" style="left:751px;top:375px;width:7px;height:7px;background:#aaa;border-radius:50%"></div>
<svg class="a" style="left:773px;top:283px" width="27" height="14"><rect width="27" height="14" fill="#e7e3f4"/><path d="M2 4h20M2 10h23" stroke="#447" stroke-width="2" stroke-dasharray="2 1"/></svg>
<div class="t" style="left:812px;top:284px;font-size:9.300px;color:#222">@May2008</div>
<div class="a checker" style="left:780px;top:306px;width:13px;height:27px;background-size:6px 6px;background-position:0 0,3px 3px;border:1px solid #aaa"></div>
<div class="a" style="left:780px;top:318px;width:13px;height:3px;background:#111"></div>
<div class="t" style="left:812px;top:314px;font-size:9.300px;color:#222">Lớp2</div>
<div class="a checker" style="left:780px;top:336px;width:13px;height:27px;background-size:6px 6px;background-position:0 0,3px 3px;border:1px solid #aaa"></div>
<div class="a" style="left:780px;top:348px;width:13px;height:3px;background:#aaa"></div>
<div class="t" style="left:812px;top:344px;font-size:9.300px;color:#222">Lớp2</div>
<div class="a" style="left:780px;top:366px;width:13px;height:27px;background:#f3d5ef"></div>
<div class="a" style="left:780px;top:376px;width:13px;height:7px;background:#b08ec8"></div>
<div class="t" style="left:812px;top:374px;font-size:9.300px;font-weight:bold;color:#111">Lớp1</div>
<svg class="a" style="left:990px;top:373px" width="15" height="15" viewBox="0 0 15 15"><circle cx="7.500" cy="7.500" r="4.500" fill="#fff"/><circle cx="7.500" cy="7.500" r="6" fill="none" stroke="#fff" stroke-width="2.200" stroke-dasharray="2.200 2"/></svg>
<div class="a" style="left:1008px;top:283px;width:15px;height:197px;background:#bcc1c4;border:1px solid #8b9194;border-radius:4px"></div>
<!-- Layer toolbar -->
<div class="a" style="left:748px;top:488px;width:276px;height:27px;background:#c5cacc"></div>
<div class="b" style="left:751px;top:491px;width:18px;height:18px"><svg viewBox="0 0 18 18" fill="none" stroke="#555"><path d="M4 3h7l3 3v9H4z"/></svg></div>
<div class="b" style="left:774px;top:491px;width:18px;height:18px"><svg viewBox="0 0 18 18" fill="none" stroke="#555"><path d="M5 3h6l2 2v10H5z"/><rect x="7.500" y="7" width="3" height="5"/></svg></div>
<div class="b" style="left:797px;top:491px;width:18px;height:18px"><svg viewBox="0 0 18 18" fill="none" stroke="#555"><path d="M5 3h6l2 2v10H5zM9 12V7M7.500 8.500L9 7l1.500 1.500"/></svg></div>
<div class="b" style="left:820px;top:491px;width:24px;height:18px;opacity:.65"><svg viewBox="0 0 24 18" fill="none" stroke="#555"><path d="M4 3h7l2 2v9H4zM10 11v5M7.500 13.500h5"/><path d="M16 8h5l-2.500 3z" fill="#555"/></svg></div>
<div class="b" style="left:847px;top:491px;width:19px;height:18px"><svg viewBox="0 0 19 18"><path d="M3 5h5l1 2h7v7H3z" fill="#444"/></svg></div>
<div class="sep" style="left:870px;top:495px;height:10px"></div>
<div class="b" style="left:875px;top:491px;width:19px;height:18px"><svg viewBox="0 0 19 18" fill="none" stroke="#555"><rect x="4" y="6" width="8" height="9"/><rect x="7" y="3" width="8" height="9"/></svg></div>
<div class="b" style="left:898px;top:491px;width:19px;height:18px"><svg viewBox="0 0 19 18" fill="none" stroke="#666"><path d="M3 4h5v4H3zM3 10h5v4H3zM10 9h5v5h-5zM11 7l4-4"/></svg></div>
<div class="sep" style="left:922px;top:495px;height:10px"></div>
<div class="b" style="left:927px;top:491px;width:19px;height:18px"><svg viewBox="0 0 19 18" fill="none" stroke="#333"><path d="M5 6v9h9V6M4 5h11M7.500 5V3h4v2M7.500 8v5M9.500 8v5M11.500 8v5"/></svg></div>
<div class="t" style="left:806px;top:491px;color:#bcc0c2;font-size:11px;line-height:13px">Activate Windows</div>
<div class="t" style="left:804px;top:508px;color:#a9aeb1;font-size:11.300px">Go to Settings to activate Windows.</div>
<div class="a" style="left:746px;top:515px;width:278px;height:1px;background:#aaa"></div>
<div class="a" style="left:748px;top:516px;width:41px;height:14px;background:#d8dbdd;border:1px solid #bbb;color:#999;font-size:8px;line-height:12px;text-align:center;white-space:nowrap;overflow:hidden">Brush Size</div>
<div class="a" style="left:791px;top:515px;width:21px;height:15px;background:#e6e8e9;border:1px solid #aaa;border-radius:0 0 2px 2px;text-align:center;line-height:14px;font-size:8.500px;color:#333">Lớp</div>

<!-- Status -->
<div class="a" style="left:0;top:531px;width:1024px;height:15px;background:#d0d5d8"></div>
<div class="t" style="left:5px;top:533px;font-size:8.600px;color:#444;word-spacing:.5px">736 * 1472 pixel &nbsp;(26 * 51.9cm) &nbsp;72 dpi &nbsp;66 % &nbsp;( 898, 972 ) &nbsp;Vẽ một đường thẳng bằng cách giữ phím Shift, Thay đổi cỡ cọ bằng cách giữ phím Ctrl, Alt và kéo</div>

<!-- Taskbar -->
<div class="a" style="left:0;top:546px;width:1024px;height:30px;background:#1b2b3b"></div>
<div class="a" style="left:0;top:546px;width:37px;height:30px;background:#12303c"></div>
<svg class="a" style="left:12px;top:554px" width="13" height="13"><path d="M0 1.500L6 .7V6H0zM7 .6L13 0v6H7zM0 7h6v5.300L0 11.500zM7 7h6v6l-6-.8z" fill="#fff"/></svg>
<div class="a" style="left:37px;top:546px;width:257px;height:30px;background:#f2f2f2"></div>
<svg class="a" style="left:44px;top:553px" width="14" height="15" fill="none" stroke="#222" stroke-width="1.100"><circle cx="8.500" cy="5.500" r="4.500"/><path d="M5 9l-4 5"/></svg>
<div class="t" style="left:66px;top:555px;font-size:10.900px;color:#333">Type here to search</div>
<svg class="a" style="left:305px;top:554px" width="14" height="14"><circle cx="7" cy="7" r="5" fill="none" stroke="#fff" stroke-width="1.500"/></svg>
<svg class="a" style="left:341px;top:554px" width="13" height="14" fill="none" stroke="#fff"><path d="M1.500 3.500h7v7h-7zM0 1h10M0 13h10M11 2h2M11 6h2M11 10h2"/></svg>
<svg class="a" style="left:377px;top:551px" width="19" height="19"><path d="M2 9C3 3 8 1 11 1c4 0 7 3 7 8v2H8c1 3 5 4 9 2v4c-4 2-10 1-12-2-1-2-1-4 0-5 1-2 3-3 5-3-2 0-5 0-8 2z" fill="#2b9fd8"/><path d="M2 9c2-2 4-3 6-2-2 2-2 6 1 9-4-1-7-3-7-7z" fill="#2fc27f"/></svg>
<svg class="a" style="left:415px;top:552px" width="17" height="16"><path d="M0 2h6l2 2h9v11H0z" fill="#f7c63f"/><rect y="7" width="17" height="8" fill="#fbe08a"/><rect x="4" y="11" width="9" height="4" fill="#3a8cd8"/></svg>
<svg class="a" style="left:452px;top:551px" width="17" height="19"><path d="M5 5a3.500 3.500 0 0 1 7 0" fill="none" stroke="#3ab0e0" stroke-width="1.300"/><rect y="5" width="17" height="14" rx="2" fill="#e8e8e8"/><rect x="4" y="8" width="4" height="4" fill="#f25022"/><rect x="9" y="8" width="4" height="4" fill="#7fba00"/><rect x="4" y="13" width="4" height="4" fill="#00a4ef"/><rect x="9" y="13" width="4" height="4" fill="#ffb900"/></svg>
<svg class="a" style="left:487px;top:553px" width="19" height="15"><rect width="19" height="15" rx="1" fill="#1c9ee0"/><path d="M0 1l9.500 7L19 1" fill="#9bd9f7"/><path d="M0 15l7-8 2.500 2 2.500-2 7 8z" fill="#0f7cc0"/></svg>
<svg class="a" style="left:525px;top:552px" width="17" height="17" viewBox="0 0 17 17"><circle cx="8.500" cy="8.500" r="8.500" fill="#e8453c"/><path d="M8.500 8.500L1 4.500a8.500 8.500 0 0 0 5 11.700z" fill="#3aa757"/><path d="M8.500 5H16a8.500 8.500 0 0 1-8 12z" fill="#fcc934"/><circle cx="8.500" cy="8.500" r="3.800" fill="#4a8cf0" stroke="#fff"/></svg>
<svg class="a" style="left:560px;top:551px" width="21" height="20"><rect width="18" height="18" rx="5" fill="#f2f6fb"/><path d="M3 4h12v9H3z" fill="#2f74e4"/><text x="4" y="11" font-size="6" font-family="Liberation Sans" fill="#fff" font-weight="bold">Zalo</text><circle cx="17" cy="16" r="3.500" fill="#e0382e"/></svg>
<div class="a" style="left:590px;top:546px;width:34px;height:30px;background:#3d4a56"></div>
<svg class="a" style="left:599px;top:552px" width="14" height="17"><rect width="14" height="17" fill="#f5f5f5"/><rect x="1" y="1" width="12" height="6" fill="#c22"/><rect x="2" y="9" width="10" height="6" fill="#333"/><rect x="4" y="3" width="6" height="1" fill="#fff"/></svg>
<div class="a" style="left:519px;top:574px;width:29px;height:2px;background:#7fb8dc"></div>
<div class="a" style="left:556px;top:574px;width:29px;height:2px;background:#7fb8dc"></div>
<div class="a" style="left:590px;top:574px;width:34px;height:2px;background:#7fb8dc"></div>
<svg class="a" style="left:703px;top:552px" width="17" height="17"><circle cx="8" cy="7" r="6" fill="#f7b733"/><ellipse cx="9" cy="12" rx="7.500" ry="4" fill="#bde0f5"/></svg>
<div class="t" style="left:727px;top:555px;font-size:10.400px;color:#dfe6ea">26°C</div>
<div class="t" style="left:755px;top:555px;font-size:10.400px;color:#dfe6ea">Nắng rải rác</div>
<svg class="a" style="left:823px;top:557px" width="10" height="7" fill="none" stroke="#eee"><path d="M0.500 6L5 1.500 9.500 6"/></svg>
<svg class="a" style="left:842px;top:553px" width="10" height="14" fill="none" stroke="#ddd"><rect x="1.500" y="3.500" width="6" height="7"/><path d="M3 1h4M3 13h4"/></svg>
<svg class="a" style="left:858px;top:555px" width="13" height="10"><rect x="3" y="2" width="10" height="7" fill="#ddd"/><rect y="0" width="3" height="3" fill="#ddd"/></svg>
<svg class="a" style="left:878px;top:555px" width="11" height="11" fill="none" stroke="#99a"><path d="M1 10a9 9 0 0 1 9-9M3.500 10a6.500 6.500 0 0 1 6.500-6.500M6 10a4 4 0 0 1 4-4"/></svg>
<svg class="a" style="left:893px;top:555px" width="14" height="11" fill="none" stroke="#ddd"><path d="M1 4h2l3-3v9L3 7H1zM9 3c1 1 1 4 0 5M11 1.500c2 2 2 6 0 8"/></svg>
<div class="t" style="left:914px;top:555px;font-size:9.500px;color:#dfe6ea">ENG</div>
<div class="t" style="left:944px;top:547px;font-size:10px;color:#dfe6ea;width:32px;text-align:center">2:15 PM</div>
<div class="t" style="left:942px;top:561px;font-size:10px;color:#dfe6ea;width:36px;text-align:center">3/4/2022</div>
<svg class="a" style="left:992px;top:553px" width="18" height="16"><path d="M0 1h13v9H4l-2 2v-2H0z" fill="#eee"/><path d="M2 3.500h9M2 6h9" stroke="#556"/><circle cx="12" cy="11" r="4.500" fill="#333" stroke="#999"/></svg>
<div class="t" style="left:1001px;top:560px;font-size:7.500px;line-height:8px;color:#fff;width:6px;text-align:center">2</div>
<div class="a" style="left:1020px;top:546px;width:1px;height:30px;background:#445"></div>
</body></html>
